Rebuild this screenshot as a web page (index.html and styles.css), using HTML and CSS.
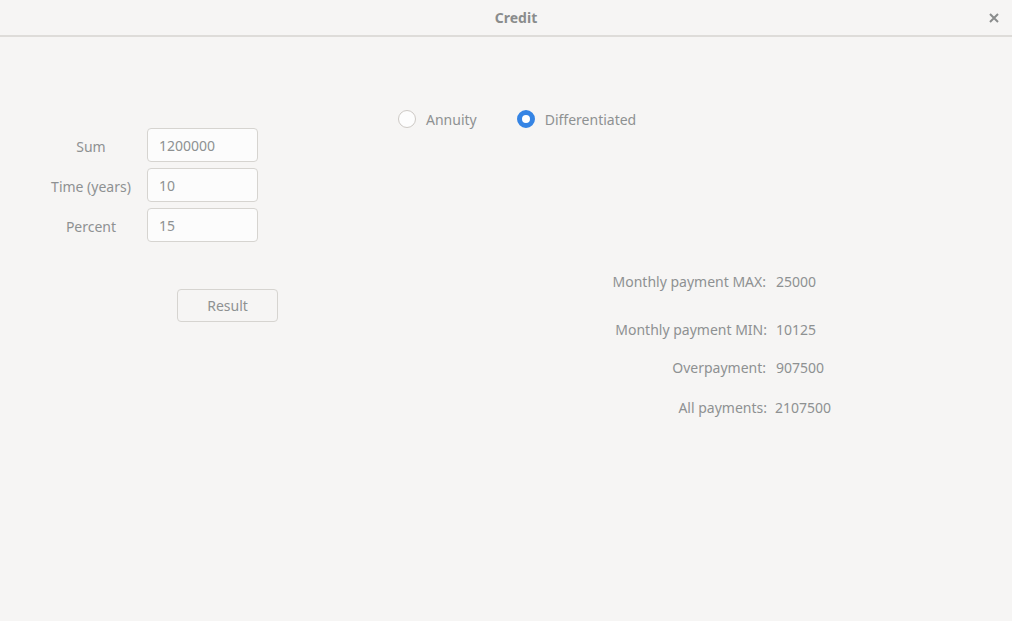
FILE: index.html
```html
<!DOCTYPE html>
<html>
<head>
<meta charset="utf-8">
<link rel="stylesheet" href="styles.css">
</head>
<body>
<div class="window">
  <header class="titlebar">
    <span class="title">Credit</span>
    <span class="close">
      <svg width="10" height="10" viewBox="0 0 10 10"><path d="M1 1L9 9M9 1L1 9" stroke="#8a8c8c" stroke-width="2" stroke-linecap="butt"/></svg>
    </span>
  </header>
  <main class="content">
    <section class="left">
      <div class="form">
        <div class="row"><label class="label">Sum</label><input class="field" value="1200000"></div>
        <div class="row"><label class="label">Time (years)</label><input class="field" value="10"></div>
        <div class="row"><label class="label">Percent</label><input class="field" value="15"></div>
      </div>
      <button class="btn">Result</button>
    </section>
    <section class="right">
      <div class="radios">
        <span class="radio"><span class="dot"></span>Annuity</span>
        <span class="radio checked"><span class="dot"></span>Differentiated</span>
      </div>
      <div class="results">
        <div class="res r1"><span class="k">Monthly payment MAX:</span><span class="v">25000</span></div>
        <div class="res r2"><span class="k">Monthly payment MIN:</span><span class="v">10125</span></div>
        <div class="res r3"><span class="k">Overpayment:</span><span class="v">907500</span></div>
        <div class="res r4"><span class="k">All payments:</span><span class="v">2107500</span></div>
      </div>
    </section>
  </main>
</div>
</body>
</html>
```

FILE: styles.css
```css
html, body {
  margin: 0;
  padding: 0;
  background: #f6f5f4;
  font-family: "Noto Sans", "Open Sans", sans-serif;
  font-size: 14px;
  color: #8e9192;
}
.window {
  width: 1012px;
  height: 621px;
  overflow: hidden;
}
.titlebar {
  border-bottom: 2px solid #dedcd9;
  display: flex;
  align-items: center;
  justify-content: center;
  position: relative;
  box-sizing: border-box;
  height: 37px;
  padding-left: 20px;
}
.title {
  font-weight: bold;
  color: #8a8c8c;
  font-size: 14px;
  margin-top: -1px;
}
.close {
  position: absolute;
  right: 13px;
  top: 13px;
  width: 10px;
  height: 10px;
  display: flex;
}
.content {
  display: flex;
}
.left {
  width: 290px;
  padding-top: 91px;
}
.form {
  display: flex;
  flex-direction: column;
  gap: 6px;
}
.row {
  display: flex;
  align-items: center;
}
.label {
  width: 100px;
  margin-left: 41px;
  margin-right: 6px;
  text-align: center;
  padding-top: 2px;
}
.field {
  width: 111px;
  height: 34px;
  box-sizing: border-box;
  border: 1px solid #d6d4d0;
  border-radius: 4px;
  background: #fcfcfc;
  font-family: inherit;
  font-size: 14px;
  color: #8e9192;
  padding: 0 11px;
  outline: none;
}
.btn {
  display: block;
  margin-left: 177px;
  margin-top: 47px;
  width: 101px;
  height: 33px;
  box-sizing: border-box;
  border: 1px solid #d6d4d0;
  border-radius: 4px;
  background: #f6f5f4;
  font-family: inherit;
  font-size: 14px;
  color: #8e9192;
  padding: 0;
}
.right {
  flex: 1;
}
.radios {
  display: flex;
  gap: 40px;
  margin-left: 108px;
  margin-top: 72px;
  height: 20px;
  align-items: center;
}
.radio {
  display: flex;
  align-items: center;
  gap: 10px;
}
.dot {
  width: 18px;
  height: 18px;
  box-sizing: border-box;
  border-radius: 50%;
  border: 1px solid #cdc9c5;
  background: #fdfdfd;
}
.checked .dot {
  border: 5px solid #3584e4;
  background: #ffffff;
}
.results {
  display: grid;
  grid-template-columns: 176px auto;
  margin-left: 310px;
  margin-top: 143px;
}
.res {
  display: contents;
}
.k {
  text-align: right;
  padding-right: 10px;
  height: 20px;
  line-height: 20px;
}
.v {
  height: 20px;
  line-height: 20px;
}
.r2 .k, .r2 .v { margin-top: 28px; }
.r3 .k, .r3 .v { margin-top: 18px; }
.r4 .k, .r4 .v { margin-top: 20px; }
.r2 .k { padding-right: 9px; }
.r4 .k { padding-right: 9px; }
.r4 .v { margin-left: -1px; }
```
